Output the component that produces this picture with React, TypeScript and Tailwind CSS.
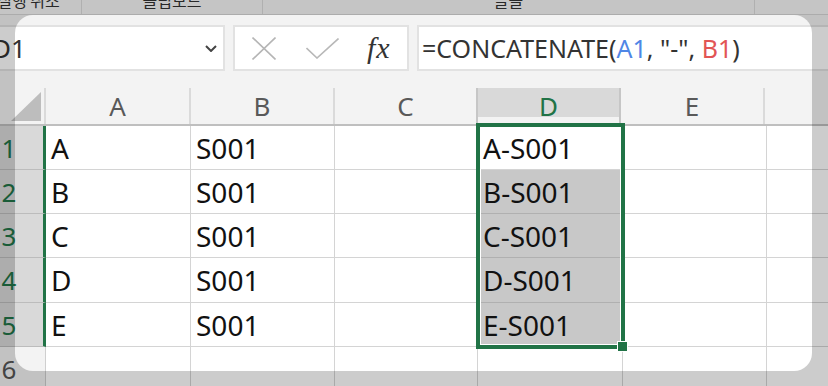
import React from "react";

const cols = [
  { l: "A", w: 145 },
  { l: "B", w: 144 },
  { l: "C", w: 143 },
  { l: "D", w: 145 },
  { l: "E", w: 144 },
];

const data: string[][] = [
  ["A", "S001", "", "A-S001", ""],
  ["B", "S001", "", "B-S001", ""],
  ["C", "S001", "", "C-S001", ""],
  ["D", "S001", "", "D-S001", ""],
  ["E", "S001", "", "E-S001", ""],
  ["", "", "", "", ""],
];

const rowHeights = [44, 44, 44, 45, 44, 44];

export default function App() {
  return (
    <div className="relative w-[828px] h-[386px] overflow-hidden bg-[#f3f3f3] font-['Noto_Sans','Noto_Sans_CJK_KR',sans-serif]">
      {/* Ribbon group labels */}
      <div className="flex h-[15px] bg-[#f7f7f7] border-b border-[#d8d8d8] overflow-hidden text-[16px] leading-none text-[#333] font-['Noto_Sans_CJK_KR',sans-serif]">
        <div className="w-[106px] -ml-[24px] shrink-0 flex justify-center border-r border-[#dcdcdc]">
          <span className="-mt-[8px]">실행 취소</span>
        </div>
        <div className="w-[181px] shrink-0 flex justify-center border-r border-[#dcdcdc]">
          <span className="-mt-[8px]">클립보드</span>
        </div>
        <div className="w-[492px] shrink-0 flex justify-center border-r border-[#dcdcdc]">
          <span className="-mt-[8px]">글꼴</span>
        </div>
        <div className="flex-1" />
      </div>

      {/* Formula bar */}
      <div className="flex pt-[10px] pb-[17px] bg-[#f3f3f3]">
        <div className="w-[240px] -ml-[15px] h-[46px] shrink-0 bg-white border-2 border-[#e2e2e2] flex items-center justify-between">
          <span className="text-[26px] leading-none text-[#333] ml-[5px]">D1</span>
          <svg width="12" height="7" viewBox="0 0 12 7" className="mr-[6px]">
            <polyline points="1,1 6,6 11,1" fill="none" stroke="#444" strokeWidth="2" />
          </svg>
        </div>
        <div className="ml-[8px] w-[176px] h-[46px] shrink-0 bg-white border-2 border-[#e2e2e2] flex items-center pl-[17px]">
          <svg width="24" height="23" viewBox="0 0 24 23">
            <line x1="0.5" y1="0.5" x2="23.5" y2="22.5" stroke="#b5b5b5" strokeWidth="1.6" />
            <line x1="23.5" y1="0.5" x2="0.5" y2="22.5" stroke="#b5b5b5" strokeWidth="1.6" />
          </svg>
          <svg width="33" height="21" viewBox="0 0 33 21" className="ml-[30px]">
            <polyline points="0.5,10 11,20 32.5,0.5" fill="none" stroke="#b8b8b8" strokeWidth="1.6" />
          </svg>
          <span className="ml-[28px] text-[30px] leading-none italic text-[#333] tracking-[1px] font-['Liberation_Serif',serif]">
            fx
          </span>
        </div>
        <div className="ml-[8px] flex-1 -mr-[4px] h-[46px] bg-white border-2 border-[#e2e2e2] flex items-center pl-[3px]">
          <span className="text-[25px] leading-none text-[#333] whitespace-nowrap">
            =CONCATENATE(<span className="text-[#4f86e6]">A1</span>, "-", <span className="text-[#e25555]">B1</span>)
          </span>
        </div>
      </div>

      {/* Grid */}
      <div className="relative">
        {/* Column headers */}
        <div className="flex h-[38px] bg-[#f3f3f3] border-b-2 border-[#bfbfbf]">
          <div className="w-[46px] shrink-0 border-r-2 border-[#dadada] flex items-end justify-end pr-[3px] pb-[3px]">
            <svg width="30" height="29" viewBox="0 0 30 29">
              <polygon points="0,29 30,0 30,29" fill="#bdbdbd" />
            </svg>
          </div>
          {cols.map((c) => (
            <div
              key={c.l}
              style={{ width: c.w }}
              className={
                c.l === "D"
                  ? "shrink-0 border-r-2 border-[#c6c6c6] border-l-2 -ml-[2px] flex items-center justify-center text-[26px] leading-none text-[#217346] bg-[linear-gradient(#d9d9d9_29px,#f3f3f3_29px)]"
                  : "shrink-0 border-r-2 border-[#dadada] flex items-center justify-center text-[26px] leading-none text-[#595959]"
              }
            >
              {c.l}
            </div>
          ))}
          <div className="flex-1" />
        </div>

        {/* Rows */}
        {data.map((row, ri) => {
          const sel = ri < 5;
          return (
            <div key={ri} className="flex bg-white" style={{ height: rowHeights[ri] }}>
              <div
                className={
                  sel
                    ? "w-[46px] shrink-0 bg-[#d9d9d9] border-r-[3px] border-r-[#217346] border-b border-b-[#bcbcbc] flex items-center"
                    : "w-[46px] shrink-0 bg-[#f3f3f3] border-r border-r-[#cfcfcf] border-b border-b-[#d4d4d4] flex items-center"
                }
              >
                <span
                  className={
                    "w-[18px] text-center text-[26px] leading-none " +
                    (sel ? "text-[#217346]" : "text-[#555]")
                  }
                >
                  {ri + 1}
                </span>
              </div>
              {cols.map((c, ci) => {
                const grey = ci === 3 && ri >= 1 && ri <= 4;
                return (
                  <div
                    key={c.l}
                    style={{ width: c.w }}
                    className={
                      grey
                        ? "shrink-0 bg-[#c8c8c8] border-r border-b border-[#b0b0b0] flex items-center pl-[5px] text-[28px] leading-none text-[#111] whitespace-nowrap"
                        : "shrink-0 border-r border-b border-[#d4d4d4] flex items-center pl-[5px] text-[28px] leading-none text-[#111] whitespace-nowrap"
                    }
                  >
                    {row[ci]}
                  </div>
                );
              })}
              <div className="flex-1 border-b border-[#d4d4d4]" />
            </div>
          );
        })}

        {/* Selection box D1:D5 */}
        <div className="absolute left-[476px] top-[35px] w-[149px] h-[226px] border-4 border-[#217346] shadow-[inset_0_0_0_1px_#ffffff]">
          <div className="absolute -right-[7px] -bottom-[7px] w-[11px] h-[11px] bg-[#217346] border border-white" />
        </div>
      </div>

      {/* Spotlight dim overlay */}
      <div className="pointer-events-none absolute left-[15px] top-[15px] w-[797px] h-[356px] rounded-[18px] shadow-[0_0_0_1200px_rgba(0,0,0,0.2)]" />
    </div>
  );
}
